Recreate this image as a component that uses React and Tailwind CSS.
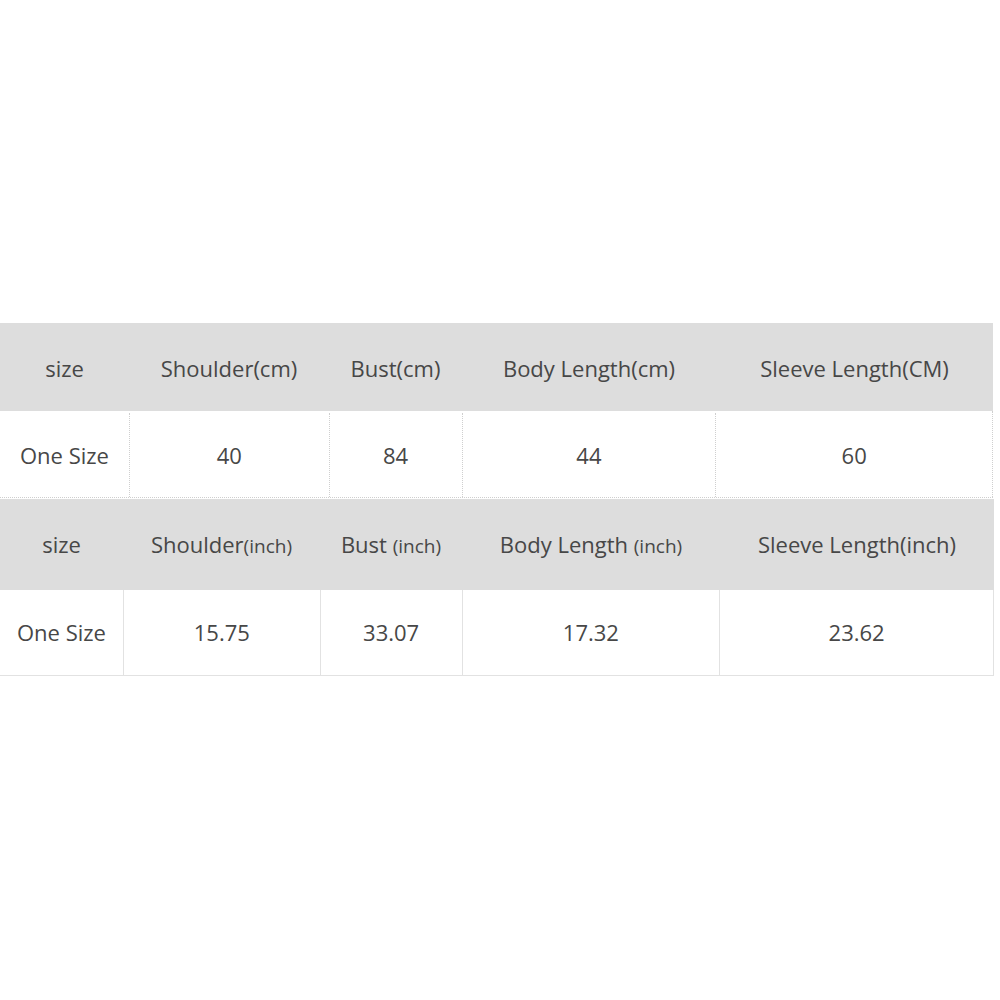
const cmHead = ['size', 'Shoulder(cm)', 'Bust(cm)', 'Body Length(cm)', 'Sleeve Length(CM)'];
const cmRow = ['One Size', '40', '84', '44', '60'];
const cmWidths = ['w-[129px]', 'w-[200px]', 'w-[133px]', 'w-[254px]', 'w-[277px]'];

const inchHead = [
  ['size', ''],
  ['Shoulder', '(inch)'],
  ['Bust ', '(inch)'],
  ['Body Length ', '(inch)'],
  ['Sleeve Length(inch)', ''],
];
const inchRow = ['One Size', '15.75', '33.07', '17.32', '23.62'];
const inchWidths = ['w-[123px]', 'w-[197px]', 'w-[142px]', 'w-[258px]', 'w-[274px]'];

const App = () => {
  return (
    <div className="w-[1000px] h-[1000px] bg-white pt-[323px] text-[#474747] text-[22px]" style={{ fontFamily: '"Open Sans", "Noto Sans", sans-serif' }}>
      {/* cm table */}
      <div className="w-[993px] border-b border-dotted border-[#cfcfcf]">
        <div className="flex h-[88px] bg-[#dddddd] pt-[3px]">
          {cmHead.map((t, i) => (
            <div key={i} className={`${cmWidths[i]} flex items-center justify-center`}>{t}</div>
          ))}
        </div>
        <div className="flex h-[86px] border-r border-dotted border-[#cfcfcf] pt-[2px]">
          {cmRow.map((t, i) => (
            <div key={i} className={`${cmWidths[i]} flex items-center justify-center ${i > 0 ? 'border-l border-dotted border-[#cfcfcf]' : ''}`}>{t}</div>
          ))}
        </div>
      </div>

      {/* inch table */}
      <div className="w-[994px] mt-[1px] border-b border-[#e2e2e2]">
        <div className="flex h-[91px] bg-[#dddddd]">
          {inchHead.map(([a, b], i) => (
            <div key={i} className={`${inchWidths[i]} flex items-center justify-center`}>
              <span className="whitespace-pre">
                {a}
                {b && <span className="text-[19px]">{b}</span>}
              </span>
            </div>
          ))}
        </div>
        <div className="flex h-[85px] border-r border-[#e2e2e2]">
          {inchRow.map((t, i) => (
            <div key={i} className={`${inchWidths[i]} flex items-center justify-center ${i > 0 ? 'border-l border-[#e2e2e2]' : ''}`}>{t}</div>
          ))}
        </div>
      </div>
    </div>
  );
};

export default App;
